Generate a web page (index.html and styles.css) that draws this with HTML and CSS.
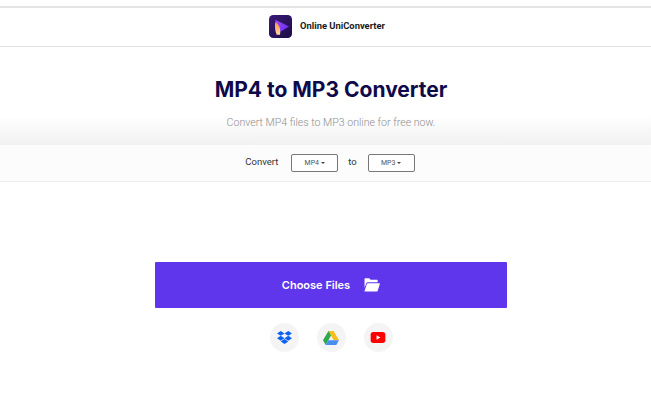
FILE: index.html
```html
<!DOCTYPE html>
<html lang="en">
<head>
<meta charset="utf-8">
<title>MP4 to MP3 Converter</title>
<link rel="stylesheet" href="styles.css">
</head>
<body>
<div class="topgap"></div>
<header class="brand">
  <svg class="logo" width="23" height="23" viewBox="0 0 24 24">
    <defs>
      <linearGradient id="bg" x1="0" y1="0" x2="1" y2="1"><stop offset="0" stop-color="#3a1a78"/><stop offset="1" stop-color="#1c0d45"/></linearGradient>
      <linearGradient id="pl" x1="0" y1="0" x2="1" y2="0.6"><stop offset="0" stop-color="#a04dff"/><stop offset="1" stop-color="#6a2cf0"/></linearGradient>
      <linearGradient id="fl" x1="0" y1="0" x2="0" y2="1"><stop offset="0" stop-color="#ff8f3f"/><stop offset="1" stop-color="#ffd9a0"/></linearGradient>
    </defs>
    <rect width="24" height="24" rx="4.5" fill="url(#bg)"/>
    <path d="M6.5 5 L21 12 L10 18.5 Z" fill="url(#pl)"/>
    <path d="M6.5 7 C10.5 10 12.5 14 11.5 20.5 L8 20.5 C6 16 6 11 6.5 7 Z" fill="url(#fl)"/>
  </svg>
  <span class="brand-name">Online UniConverter</span>
</header>
<main>
  <section class="hero">
    <h1>MP4 to MP3 Converter</h1>
    <p>Convert MP4 files to MP3 online for free now.</p>
  </section>
  <section class="format-bar">
    <span class="label">Convert</span>
    <button class="select">MP4<i class="caret"></i></button>
    <span class="label to">to</span>
    <button class="select">MP3<i class="caret"></i></button>
  </section>
  <section class="upload">
    <button class="choose">
      <span>Choose Files</span>
      <svg width="16" height="14" viewBox="0 0 17 15"><path d="M0.5 1.2 C0.5 .6 1 .2 1.5 .2 H5.5 L7 2 H13.5 C14.2 2 14.6 2.5 14.6 3 V4.6 H4 C3.2 4.6 2.7 5 2.4 5.7 L0.5 10.5 Z" fill="#fff"/><path d="M4 5.6 H16.3 C16.8 5.6 17 6 16.9 6.5 L14.6 13.6 C14.4 14.2 14 14.5 13.4 14.5 H1 C.6 14.5 .4 14.1 .5 13.8 L3 6.4 C3.2 5.9 3.5 5.6 4 5.6 Z" fill="#fff"/></svg>
    </button>
    <div class="sources">
      <span class="source">
        <svg width="15" height="14" viewBox="0 0 16 15" fill="#0b62f0"><path d="M4 0 L8 2.6 L4 5.2 L0 2.6 Z"/><path d="M12 0 L16 2.6 L12 5.2 L8 2.6 Z"/><path d="M4 5.2 L8 7.8 L4 10.4 L0 7.8 Z"/><path d="M12 5.2 L16 7.8 L12 10.4 L8 7.8 Z"/><path d="M4 11.2 L8 8.7 L12 11.2 L8 14 Z"/></svg>
      </span>
      <span class="source">
        <svg width="16" height="14" viewBox="0 0 16 14"><path d="M5.4 0 H10.6 L8 4.6 L5.4 9.2 L2.7 14 L0 9.2 Z" fill="#2fa84f"/><path d="M5.4 0 H10.6 L16 9.2 H10.7 Z" fill="#f5bf1a"/><path d="M5.4 9.2 H16 L13.3 14 H2.7 Z" fill="#4a8df0"/></svg>
      </span>
      <span class="source">
        <svg width="16" height="11" viewBox="0 0 16 12"><rect width="16" height="12" rx="3" fill="#f00"/><path d="M6.4 3.5 L10.6 6 L6.4 8.5 Z" fill="#fff"/></svg>
      </span>
    </div>
  </section>
</main>
</body>
</html>
```
FILE: styles.css
```css
* { box-sizing: border-box; }
html, body { margin: 0; padding: 0; }
body {
  width: 651px;
  height: 410px;
  overflow: hidden;
  background: #fff;
  font-family: Roboto, "Liberation Sans", sans-serif;
}
.topgap { height: 8px; border-bottom: 2px solid #e3e3e3; }
.brand {
  height: 39px;
  border-bottom: 1px solid #e4e4e4;
  display: flex;
  align-items: center;
  justify-content: center;
  gap: 8px;
  padding-left: 3px;
  padding-bottom: 1px;
}
.logo { display: block; flex: none; }
.brand-name {
  font-size: 9.4px;
  font-weight: 700;
  color: #1a1a1a;
  font-family: Roboto, sans-serif;
  margin-bottom: 2px;
}
.hero {
  height: 98px;
  padding-top: 30px;
  padding-left: 11px;
  text-align: center;
  background: linear-gradient(to bottom, #fff 0, #fff 68px, #f1f1f1 98px);
}
.hero h1 {
  margin: 0;
  font-family: Inter, Roboto, sans-serif;
  font-size: 21px;
  line-height: 26px;
  font-weight: 700;
  color: #0f0a4a;
}
.hero p {
  margin: 13px 0 0;
  font-size: 10.6px;
  font-weight: 300;
  line-height: 14px;
  color: #8f8f8f;
}
.format-bar {
  height: 37px;
  background: #fcfcfc;
  border-bottom: 1px solid #ececec;
  display: flex;
  align-items: center;
  justify-content: center;
  padding-left: 9px;
}
.label { font-size: 9.5px; color: #333; margin-bottom: 3px; }
.to { margin: 0 11px 3px 10px; }
.label:first-child { margin-right: 13px; }
.select {
  width: 47px;
  height: 18px;
  padding: 0;
  background: #fff;
  border: 1px solid #777;
  border-radius: 2px;
  font-family: Roboto, sans-serif;
  font-size: 7px;
  color: #555;
  display: flex;
  align-items: center;
  justify-content: center;
}
.caret {
  margin-left: 2px;
  border-left: 2.5px solid transparent;
  border-right: 2.5px solid transparent;
  border-top: 2.5px solid #444;
}
.upload {
  padding-top: 80px;
  padding-left: 11px;
  display: flex;
  flex-direction: column;
  align-items: center;
}
.choose {
  width: 352px;
  height: 46px;
  border: 0;
  border-radius: 1px;
  background: #5f36ec;
  color: #fff;
  font-family: Inter, Roboto, sans-serif;
  font-size: 11px;
  font-weight: 600;
  display: flex;
  align-items: center;
  justify-content: center;
  gap: 14px;
  padding-bottom: 1px;
}
.sources {
  display: flex;
  gap: 18px;
  margin-top: 15px;
}
.source {
  width: 29px;
  height: 29px;
  border-radius: 50%;
  background: #f4f4f5;
  display: flex;
  align-items: center;
  justify-content: center;
}
```
